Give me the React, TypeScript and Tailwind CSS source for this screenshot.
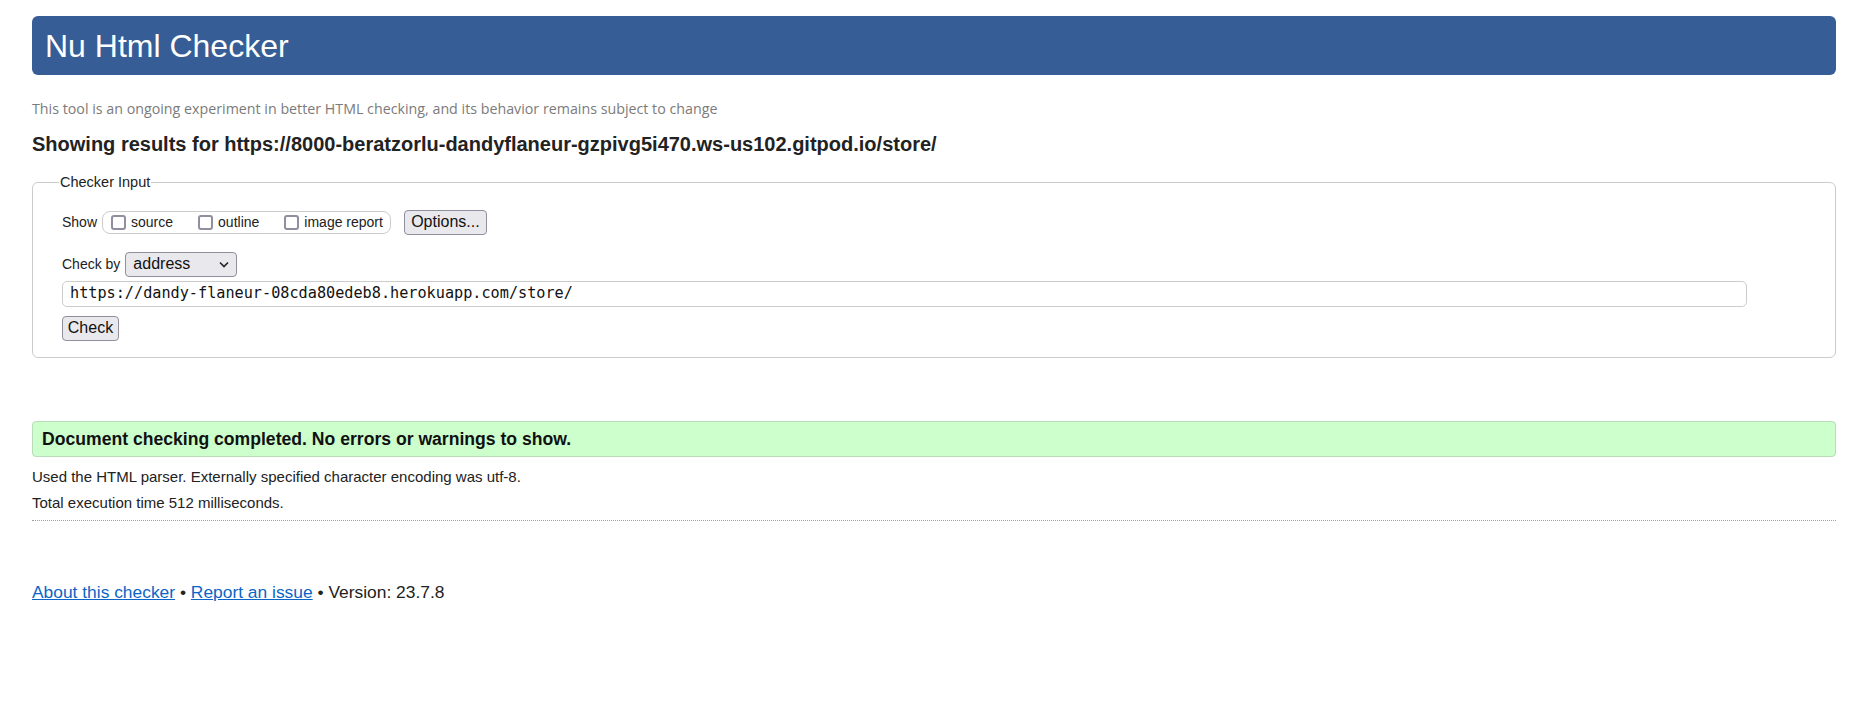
import React from "react";

function Checkbox() {
  return <span className="inline-block w-[15px] h-[15px] border-2 border-[#8f8f9d] rounded-[3px] bg-white shrink-0" />;
}

export default function App() {
  const sans = { fontFamily: '"Liberation Sans", Arial, sans-serif' };
  return (
    <div className="min-h-[705px] bg-white text-[#222]" style={sans}>
      <div className="ml-[32px] w-[1804px] pt-[16px]">
        <header className="h-[59px] rounded-[6px] bg-[#365d95] flex items-center pl-[13px]">
          <h1 className="text-white text-[32px] leading-none font-normal">Nu Html Checker</h1>
        </header>

        <p className="mt-[24px] h-[20px] leading-[20px] text-[14.25px] text-[#7b7b7b] font-['Open_Sans',sans-serif]">
          This tool is an ongoing experiment in better HTML checking, and its behavior remains subject to change
        </p>

        <h2 className="mt-[13px] h-[24px] leading-[24px] text-[20px] font-bold text-[#222]">
          Showing results for https://8000-beratzorlu-dandyflaneur-gzpivg5i470.ws-us102.gitpod.io/store/
        </h2>

        <fieldset className="mt-[18px] border border-[#cccccc] rounded-[6px] p-0 m-0">
          <legend className="ml-[26px] px-[1px] text-[14.5px] leading-[16px] text-[#222]">Checker Input</legend>
          <div className="pl-[29px] pt-[19px] pb-[16px]">
            <div className="flex items-center h-[26px]">
              <span className="text-[14px] text-[#222]">Show</span>
              <div className="ml-[5px] h-[23px] flex items-center border border-[#cccccc] rounded-[8px] pl-[8px] pr-[7px]">
                <label className="flex items-center">
                  <Checkbox />
                  <span className="ml-[5px] text-[14px]">source</span>
                </label>
                <label className="flex items-center ml-[25px]">
                  <Checkbox />
                  <span className="ml-[5px] text-[14px]">outline</span>
                </label>
                <label className="flex items-center ml-[25px]">
                  <Checkbox />
                  <span className="ml-[5px] text-[14px]">image report</span>
                </label>
              </div>
              <button className="ml-[13px] w-[83px] h-[25px] bg-[#e9e9ed] border border-[#8f8f9d] rounded-[4px] text-[16px] text-[#111] flex items-center justify-center">
                Options...
              </button>
            </div>

            <div className="mt-[16.5px] flex items-center h-[25px]">
              <span className="text-[14px] text-[#222]">Check by</span>
              <div className="ml-[5px] w-[112px] h-[25px] bg-[#e9e9ed] border border-[#8f8f9d] rounded-[4px] flex items-center justify-between pl-[7px] pr-[7px]">
                <span className="text-[16px] text-[#111]">address</span>
                <svg width="10" height="7" viewBox="0 0 10 7" className="text-[#222]">
                  <polyline points="1,1.5 5,5.5 9,1.5" fill="none" stroke="currentColor" strokeWidth="1.6" />
                </svg>
              </div>
            </div>

            <div className="mt-[4px] w-[1685px] h-[26px] border border-[#cccccc] rounded-[5px] flex items-center pl-[7px]">
              <span className="text-[15.2px] text-[#111] font-['DejaVu_Sans_Mono',monospace]">
                https://dandy-flaneur-08cda80edeb8.herokuapp.com/store/
              </span>
            </div>

            <button className="mt-[9px] w-[57px] h-[25px] bg-[#e9e9ed] border border-[#8f8f9d] rounded-[4px] text-[16px] text-[#111] flex items-center justify-center">
              Check
            </button>
          </div>
        </fieldset>

        <div className="mt-[63.5px] h-[36px] bg-[#ccffcc] border border-[#b9dcb9] rounded-[4px] flex items-center pl-[9px]">
          <p className="text-[17.6px] font-bold text-[#111]">Document checking completed. No errors or warnings to show.</p>
        </div>

        <p className="mt-[10px] h-[20px] leading-[20px] text-[15px] text-[#222]">
          Used the HTML parser. Externally specified character encoding was utf-8.
        </p>
        <p className="mt-[6px] h-[20px] leading-[20px] text-[15px] text-[#222]">Total execution time 512 milliseconds.</p>

        <hr className="mt-[7px] border-0 border-t border-dotted border-[#a0a0a0]" />

        <p className="mt-[59px] h-[24px] leading-[24px] text-[17.4px] text-[#222]">
          <a href="#" className="text-[#0b65c6] underline">About this checker</a>
          {" • "}
          <a href="#" className="text-[#0b65c6] underline">Report an issue</a>
          {" • Version: 23.7.8"}
        </p>
      </div>
    </div>
  );
}
